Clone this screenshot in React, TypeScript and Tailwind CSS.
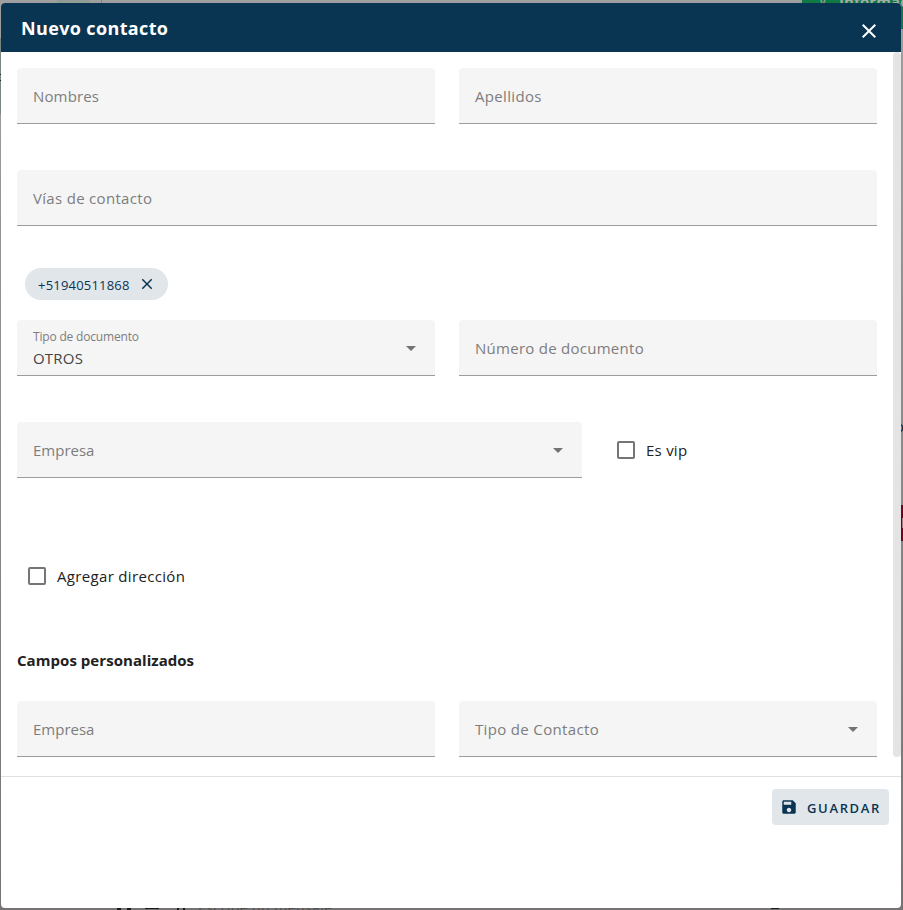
import React from "react";

const labelText = "text-[15px] leading-6 text-[#7d7d7d] whitespace-nowrap";

function Caret() {
  return (
    <svg width="24" height="24" viewBox="0 0 24 24" fill="#737373" className="shrink-0">
      <path d="M7 10l5 5 5-5z" />
    </svg>
  );
}

type FieldProps = {
  label: string;
  labelClass?: string;
  value?: string;
  select?: boolean;
  className?: string;
};

function Field({ label, labelClass = "", value, select, className = "" }: FieldProps) {
  return (
    <div
      className={`flex h-14 items-center justify-between rounded-t border-b border-[#9c9c9c] bg-[#f5f5f5] pl-4 pr-3 ${className}`}
    >
      {value ? (
        <div className="flex flex-col pt-0.5">
          <span className={`whitespace-nowrap text-xs leading-[18px] text-[#7d7d7d] ${labelClass}`}>{label}</span>
          <span className="text-[15px] leading-6 tracking-[0.2px] text-[#444444]">{value}</span>
        </div>
      ) : (
        <span className={`${labelText} ${labelClass}`}>{label}</span>
      )}
      {select && <Caret />}
    </div>
  );
}

function Checkbox({ label, className = "" }: { label: string; className?: string }) {
  return (
    <div className="flex items-center">
      <span className="size-[18px] rounded-[2px] border-2 border-[#757575]" />
      <span className={`ml-[11px] whitespace-nowrap text-[15px] leading-6 text-[#212121] ${className}`}>{label}</span>
    </div>
  );
}

function Backdrop() {
  return (
    <div className="absolute inset-0 overflow-hidden bg-linear-to-b from-[#9f9f9f] via-[#8a8a8a] to-[#757373]">
      <div className="absolute left-[57px] top-0 h-3 w-8 bg-[#8f9d92]" />
      <div className="absolute left-[101px] top-0 h-3 w-px bg-[#858585]" />
      <div className="absolute left-0 top-[38px] h-[76px] w-px bg-[#7b857f]" />
      <div className="absolute left-0 top-[74px] h-px w-px bg-[#222222]" />
      <div className="absolute left-0 top-[80px] h-px w-px bg-[#222222]" />
      <div className="absolute -right-2 top-0 h-[29px] w-[109px] bg-[#0f7a43]">
        <span className="absolute left-[17px] -top-[11px] text-[15px] leading-5 text-[#9aa79f]">y</span>
        <span className="absolute left-[37px] -top-[9px] text-[15px] font-bold leading-5 tracking-[0.1px] text-[#a4aaa6]">
          Informació
        </span>
      </div>
      <span className="absolute left-[895px] top-[416px] text-[15px] leading-5 text-[#222222]">o</span>
      <div className="absolute left-[900px] top-[505px] h-9 w-3 bg-[#730022]" />
      <div className="absolute left-[902px] top-[518px] h-[10px] w-px bg-[#a57a87]" />
      <span className="absolute left-[198px] top-[898px] whitespace-nowrap text-sm leading-5 tracking-[0.45px] text-[#515151]">
        Escribe un mensaje
      </span>
      <div className="absolute left-[117px] top-[908px] h-0.5 w-[14px] border-x-4 border-[#1a1a1a]" />
      <div className="absolute left-[145px] top-[908px] h-px w-[14px] bg-[#1a1a1a]" />
      <div className="absolute left-[177px] top-[908px] h-0.5 w-2 border-x-2 border-[#1a1a1a]" />
      <div className="absolute left-[771px] top-[908px] h-px w-2 bg-[#1a1a1a]" />
    </div>
  );
}

export default function App() {
  return (
    <div className="relative h-[910px] w-[903px] overflow-hidden px-px pt-[3px] font-['Open_Sans','Noto_Sans',sans-serif]">
      <Backdrop />
      <div className="relative flex h-[905px] w-[900px] flex-col overflow-hidden rounded bg-white">
        <header className="flex h-[49px] shrink-0 items-center justify-between bg-[#0a3552] pl-5 pr-5 text-white">
          <h1 className="text-[18px] font-bold leading-6 tracking-[0.36px]">Nuevo contacto</h1>
          <svg width="24" height="24" viewBox="0 0 24 24" fill="currentColor" className="mt-[7px]">
            <path d="M19 6.41L17.59 5 12 10.59 6.41 5 5 6.41 10.59 12 5 17.59 6.41 19 12 13.41 17.59 19 19 17.59 13.41 12z" />
          </svg>
        </header>

        <div className="flex h-[725px] shrink-0 justify-between border-b border-[#e0e0e0]">
          <main className="ml-4 flex w-[860px] flex-col pt-4">
            <div className="grid grid-cols-2 gap-6">
              <Field label="Nombres" labelClass="tracking-[0.15px]" />
              <Field label="Apellidos" labelClass="tracking-[0.33px]" />
            </div>
            <Field label="Vías de contacto" labelClass="tracking-[0.31px]" className="mt-[46px]" />

            <div className="ml-2 mt-[42px] flex h-8 w-[143px] items-center justify-between rounded-full bg-[#e1e6ea] pl-[13px] pr-3 text-[#0a3552]">
              <span className="pt-0.5 text-[13px] leading-5 tracking-[0.2px]">+51940511868</span>
              <svg width="18" height="18" viewBox="0 0 24 24" fill="currentColor">
                <path d="M19 6.41L17.59 5 12 10.59 6.41 5 5 6.41 10.59 12 5 17.59 6.41 19 12 13.41 17.59 19 19 17.59 13.41 12z" />
              </svg>
            </div>

            <div className="mt-5 grid grid-cols-2 gap-6">
              <Field label="Tipo de documento" labelClass="tracking-[-0.18px]" value="OTROS" select />
              <Field label="Número de documento" labelClass="tracking-[0.27px]" />
            </div>

            <div className="mt-[46px] flex items-center">
              <Field label="Empresa" select className="w-[565px]" />
              <div className="ml-[35px]">
                <Checkbox label="Es vip" className="tracking-[0.25px]" />
              </div>
            </div>

            <div className="ml-[11px] mt-[86px]">
              <Checkbox label="Agregar dirección" className="tracking-[0.33px]" />
            </div>

            <h2 className="mt-[60px] text-[15px] font-bold leading-6 tracking-[0.05px] text-[#212121]">
              Campos personalizados
            </h2>

            <div className="mt-[29px] grid grid-cols-2 gap-6">
              <Field label="Empresa" />
              <Field label="Tipo de Contacto" labelClass="tracking-[0.34px]" select />
            </div>
          </main>
          <div className="h-[705px] w-2 rounded-full bg-[#e4e4e4]" />
        </div>

        <footer className="flex justify-end pr-3 pt-3">
          <button className="flex h-9 w-[117px] items-center rounded bg-[#e1e6ea] pl-2 text-[#0a3552]">
            <svg width="18" height="18" viewBox="0 0 24 24" fill="currentColor">
              <path d="M17 3H5c-1.11 0-2 .9-2 2v14c0 1.1.89 2 2 2h14c1.1 0 2-.9 2-2V7l-4-4zm-5 16c-1.66 0-3-1.34-3-3s1.34-3 3-3 3 1.34 3 3-1.34 3-3 3zm3-10H5V5h10v4z" />
            </svg>
            <span className="ml-[9px] pt-0.5 text-[13px] font-semibold leading-5 tracking-[1.65px]">GUARDAR</span>
          </button>
        </footer>
      </div>
    </div>
  );
}
